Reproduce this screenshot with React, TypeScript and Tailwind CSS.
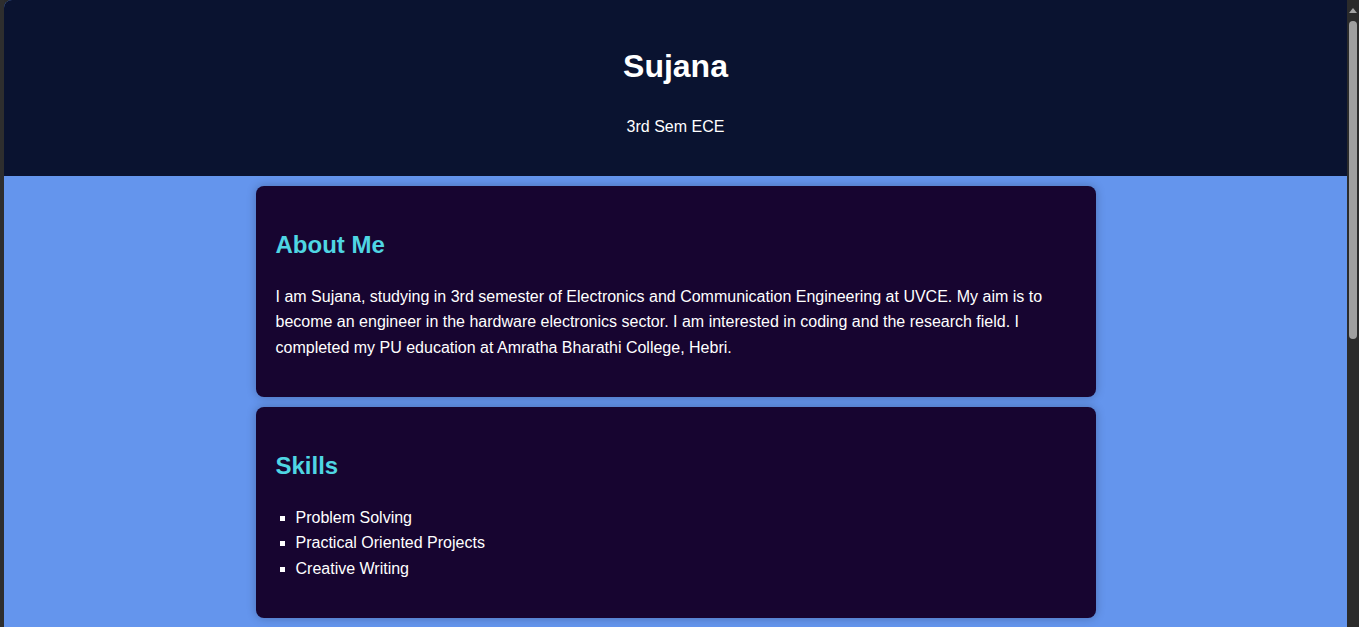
import React from "react";

export default function App() {
  return (
    <div
      className="flex h-[627px] w-full overflow-hidden bg-[#2b2b2b] text-white"
      style={{ fontFamily: '"Liberation Sans", Arial, sans-serif' }}
    >
      <div className="w-[4px] shrink-0 bg-[#2e2e2e]" />
      <div className="flex-1 overflow-hidden rounded-tl-[8px] bg-[#6495ed] leading-[1.6]">
        <header className="bg-[#0a1330] px-5 py-5 text-center">
          <h1 className="mt-[21.44px] mb-[21.44px] text-[32px] font-bold leading-[1.6]">Sujana</h1>
          <p className="mb-4 text-[16px]">3rd Sem ECE</p>
        </header>
        <main className="flex flex-col items-center gap-[10px] pt-[10px]">
          <section className="w-[840px] rounded-[8px] bg-[#170530] p-5 shadow-[0_0_10px_rgba(0,0,0,0.25)]">
            <h2 className="mt-[19.92px] mb-[19.92px] text-[24px] font-bold leading-[1.6] text-[#4fd6e3]">About Me</h2>
            <p className="mb-4 text-[16px] leading-[1.6]">
              I am Sujana, studying in 3rd semester of Electronics and Communication Engineering at UVCE. My aim is to become an engineer in the hardware electronics sector. I am interested in coding and the research field. I completed my PU education at Amratha Bharathi College, Hebri.
            </p>
          </section>
          <section className="w-[840px] rounded-[8px] bg-[#170530] p-5 shadow-[0_0_10px_rgba(0,0,0,0.25)]">
            <h2 className="mt-[19.92px] mb-[19.92px] text-[24px] font-bold leading-[1.6] text-[#4fd6e3]">Skills</h2>
            <ul className="mb-4 list-[square] pl-5 text-[16px] leading-[1.6]">
              <li>Problem Solving</li>
              <li>Practical Oriented Projects</li>
              <li>Creative Writing</li>
            </ul>
          </section>
        </main>
      </div>
      <div className="relative flex w-[12px] shrink-0 flex-col items-center bg-[#2b2b2b]">
        <div className="mt-[8px] h-0 w-0 border-x-[4px] border-b-[5px] border-x-transparent border-b-[#a3a3a3]" />
        <div className="mt-[8px] h-[318px] w-[8px] rounded-[4px] bg-[#9f9f9f]" />
      </div>
    </div>
  );
}
